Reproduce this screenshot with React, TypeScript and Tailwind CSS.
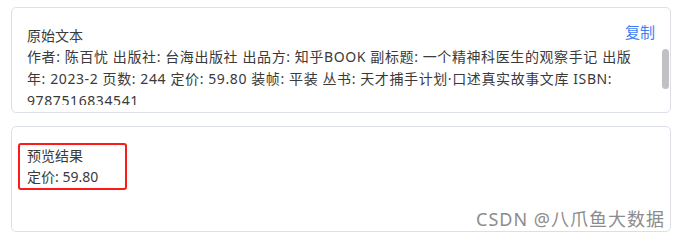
import React from 'react';

const rawText =
    '作者: 陈百忧 出版社: 台海出版社 出品方: 知乎BOOK 副标题: 一个精神科医生的观察手记 出版年: 2023-2 页数: 244 定价: 59.80 装帧: 平装 丛书: 天才捕手计划·口述真实故事文库 ISBN: 9787516834541';

export default function App() {
    return (
        <div
            className="relative w-[682px] h-[240px] bg-white px-[11px] pt-[7px] text-[14px] text-[#3a3a3a]"
            style={{ fontFamily: '"Noto Sans", "Noto Sans CJK SC", sans-serif' }}
        >
            {/* 原始文本 */}
            <div className="relative h-[106px] border border-[#dcdfe6] rounded-[5px] flex flex-col">
                <div className="flex items-start justify-between pl-[15px] pr-[15px] pt-[18px]">
                    <span className="leading-[20px]">原始文本</span>
                    <button className="leading-[13px] text-[15px] text-[#3d7ef5] cursor-pointer">复制</button>
                </div>
                <div className="h-[59px] overflow-hidden pl-[15px] pr-[24px] leading-[22px] tracking-[0.6px]">
                    {rawText}
                </div>
                {/* scrollbar thumb */}
                <div className="absolute right-[1px] top-[41px] w-[7px] h-[40px] rounded-full bg-[#c1c1c1]" />
            </div>

            {/* 预览结果 */}
            <div className="relative mt-[13px] h-[106px] border border-[#dcdfe6] rounded-[5px] pl-[15px] pt-[19px]">
                <div className="leading-[20px]">预览结果</div>
                <div className="leading-[21px]">定价: 59.80</div>
                <div className="absolute left-[6px] top-[16px] w-[109px] h-[47px] border-2 border-[#ff1a1a] rounded-[3px]" />
            </div>

            <div
                className="absolute right-[17px] top-[208px] text-[18px] leading-[22px] tracking-[1px] text-[#8c8c8c]"
                style={{ textShadow: '0 0 1px #ffffff' }}
            >
                CSDN @八爪鱼大数据
            </div>
        </div>
    );
}
